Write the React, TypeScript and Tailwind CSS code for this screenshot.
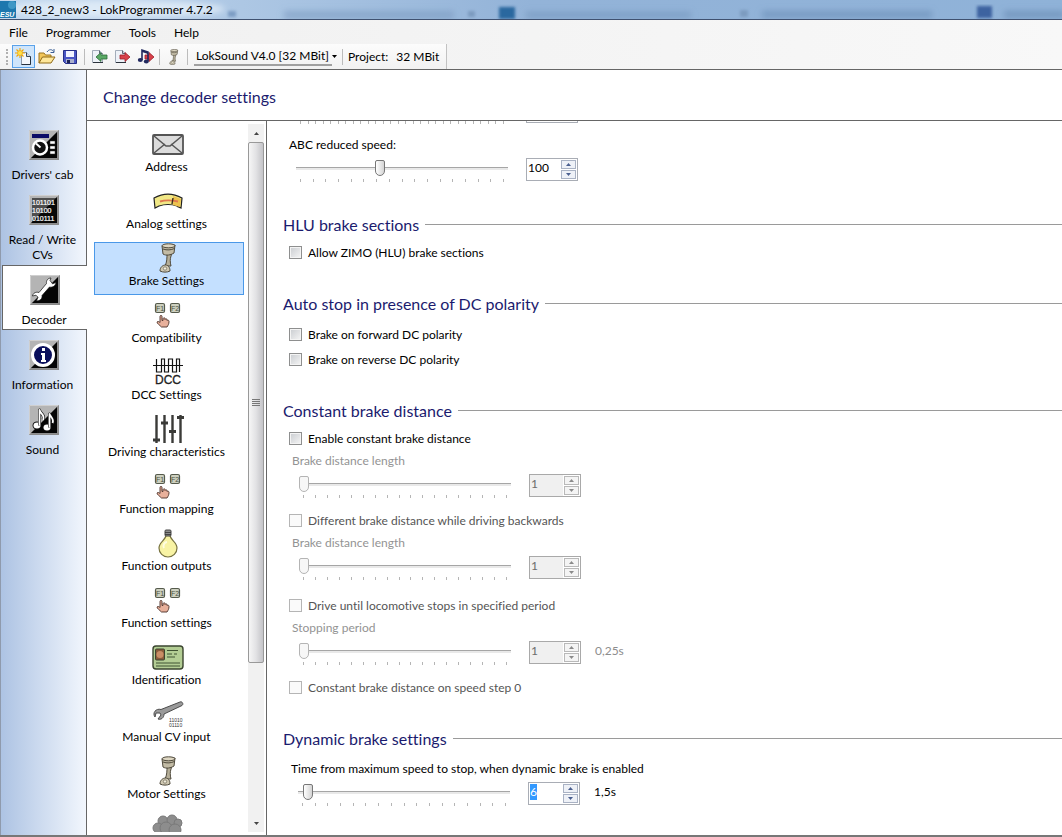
import React, { useEffect, useRef, useState } from 'react';
import clsx from 'clsx';

type IconProps = { className?: string };

/* ---------- toolbar icons ---------- */

const LogoIcon = () => (
  <svg width="16" height="17" viewBox="0 0 16 17" aria-hidden="true">
    <rect width="16" height="17" fill="#1d77ae" />
    <circle cx="12" cy="4" r="4" fill="#55aed6" opacity="0.6" />
    <text x="0" y="16" fontSize="7" fontWeight="bold" fontStyle="italic" fill="#fff" fontFamily="Liberation Sans, sans-serif">
      ESU
    </text>
  </svg>
);

const NewIcon = () => (
  <svg width="18" height="18" viewBox="0 0 18 18" aria-hidden="true">
    <path d="M6.500 4.500h5l4 4v8h-9z" fill="#f4f7fb" stroke="#8b98a8" />
    <path d="M11.500 4.500v4h4" fill="#cfdae6" stroke="#3d4a5a" />
    <path d="M15.500 8.500v8h-9" fill="none" stroke="#27313e" />
    <path d="M5 0v10M0 5h10M1.500 1.500l7 7M8.500 1.500l-7 7" stroke="#f5a800" strokeWidth="1.100" />
    <circle cx="5" cy="5" r="2.500" fill="#ffe14a" stroke="#f0a000" strokeWidth="0.600" />
  </svg>
);

const OpenIcon = () => (
  <svg width="18" height="18" viewBox="0 0 18 18" aria-hidden="true">
    <path d="M1 15V5h5l1.500 2H13v3" fill="#f2c65a" stroke="#9b7420" />
    <path d="M1 15l3.500-6H17l-4 6z" fill="#ffe79a" stroke="#8f6a18" />
    <path d="M9 4c2-3 5-3 6.500-.5M16 1v3.500h-3.500" fill="none" stroke="#3b5f94" />
  </svg>
);

const SaveIcon = () => (
  <svg width="16" height="16" viewBox="0 0 16 16" aria-hidden="true">
    <path d="M1.500 1.500h13v13h-11l-2-2z" fill="#4a56c4" stroke="#262f86" />
    <rect x="4" y="2" width="8" height="6" fill="#f2f4ff" />
    <rect x="4" y="10" width="8" height="4" fill="#aab0cc" />
    <rect x="5" y="11" width="3" height="3" fill="#1d2457" />
  </svg>
);

const ReadIcon = () => (
  <svg width="17" height="17" viewBox="0 0 17 17" aria-hidden="true">
    <path d="M1.500 2.500h7l3 3v9h-10z" fill="#eef2f8" stroke="#a3adba" />
    <path d="M8.500 2.500v3h3" fill="#c8d2de" stroke="#5b6674" />
    <path d="M2 14.500h10" stroke="#2c333d" />
    <path d="M5 9l5-4.500v2.500h6v4h-6v2.500z" fill="#5aa965" stroke="#2b6a38" strokeWidth="0.800" />
  </svg>
);

const WriteIcon = () => (
  <svg width="17" height="17" viewBox="0 0 17 17" aria-hidden="true">
    <path d="M1.500 2.500h7l3 3v9h-10z" fill="#eef2f8" stroke="#a3adba" />
    <path d="M8.500 2.500v3h3" fill="#c8d2de" stroke="#5b6674" />
    <path d="M2 14.500h10" stroke="#2c333d" />
    <path d="M16 9l-5-4.500V7H6v4h5v2.500z" fill="#d8404a" stroke="#9c2028" strokeWidth="0.800" />
  </svg>
);

const WriteSoundIcon = () => (
  <svg width="18" height="17" viewBox="0 0 18 17" aria-hidden="true">
    <path d="M17 9l-5-4.500V7H8v4h4v2.500z" fill="#d8404a" stroke="#9c2028" strokeWidth="0.800" />
    <path d="M5 12V2l6 2v9" fill="none" stroke="#22295f" strokeWidth="1.600" />
    <path d="M5 2l6 2v2L5 4z" fill="#22295f" />
    <ellipse cx="3.300" cy="12" rx="2.500" ry="1.900" fill="#22295f" />
    <ellipse cx="9.300" cy="13.500" rx="2.500" ry="1.900" fill="#22295f" />
  </svg>
);

const PistonIcon = ({ className }: IconProps) => (
  <svg className={className} viewBox="0 0 18 30" aria-hidden="true">
    <path d="M8 10h5l-1 3c-1 3-1 6 0 10l-6 0c2-4 2-8 2-13z" fill="#b5ae98" stroke="#4f4a3c" />
    <path d="M3 3l1 8c3 2 8 1 11-1l1-8z" fill="#c2bba5" stroke="#4f4a3c" />
    <ellipse cx="9.500" cy="2.800" rx="6.500" ry="2" fill="#ddd6c2" stroke="#4f4a3c" />
    <path d="M4 6c4 1.500 8 1 11.500-.5" fill="none" stroke="#4f4a3c" />
    <path d="M1 28c0-4 3-6 5.500-6s4.500 2 4.500 6c-3 1.500-7 1.500-10 0z" fill="#cfc8b2" stroke="#4f4a3c" />
    <circle cx="6" cy="25.500" r="1.700" fill="#f2eede" stroke="#6d6756" strokeWidth="0.700" />
  </svg>
);

/* ---------- sidebar icons ---------- */

const Tile = ({ children }: { children: React.ReactNode }) => (
  <svg width="30" height="30" viewBox="0 0 30 30" aria-hidden="true">
    <rect width="30" height="30" fill="#8e8e8e" />
    <path d="M0 0h30L0 30z" fill="#b4b4b4" />
    <path d="M28 2v26H2z" fill="#050505" />
    <path d="M.5 29.500V.5h29" fill="none" stroke="#cfcfcf" />
    <path d="M29.500.5v29H.5" fill="none" stroke="#8a8a8a" />
    {children}
  </svg>
);

const CabIcon = () => (
  <Tile>
    <rect x="3" y="4" width="17" height="4" fill="#0c0c66" />
    <circle cx="11" cy="17.500" r="7" fill="#111" stroke="#fff" strokeWidth="2.500" />
    <path d="M7 13.500l4.500 4" stroke="#fff" strokeWidth="2" />
    <path d="M21 11h5v3h-5zM21 16h5v3h-5zM21 21h5v3h-5z" fill="#fff" stroke="#333" strokeWidth="0.500" />
  </Tile>
);

const BinaryIcon = () => (
  <Tile>
    <path d="M3 3h24v24H3z" fill="#0a0a0a" opacity="0.6" />
    <g fontFamily="Liberation Sans, sans-serif" fontSize="7" fill="#fff" stroke="#fff" strokeWidth="0.200">
      <text x="3" y="10">101101</text>
      <text x="3" y="18">10100</text>
      <text x="3" y="26">010111</text>
    </g>
  </Tile>
);

const WrenchIcon = () => (
  <Tile>
    <path
      d="M21 3c-3 0-5 2.500-4.500 5.500L9 17.500C6 16.500 3 18 2.500 21l3.500-.8 2 2-1.500 3.500c3.500.5 6-2 5.500-5.200l7.500-8.500c3 .8 6-1 6.500-4.500l-3.500 1.300L20 5.500z"
      fill="#fff"
      stroke="#111"
      strokeWidth="0.700"
    />
  </Tile>
);

const InfoIcon = () => (
  <Tile>
    <circle cx="14" cy="15" r="10.500" fill="#0a0f5c" stroke="#fff" strokeWidth="3" />
    <path d="M13 8h3v3h-3zM12 13h4v7h1v2h-5v-2h1v-5h-1z" fill="#fff" />
  </Tile>
);

const SoundIcon = () => (
  <Tile>
    <g fill="#fff" stroke="#111" strokeWidth="2" paintOrder="stroke">
      <ellipse cx="8" cy="20.500" rx="3.500" ry="3" />
      <ellipse cx="18" cy="22.500" rx="3.500" ry="3" />
    </g>
    <g fill="none" strokeLinejoin="round">
      <path d="M10.500 20.500V5c1 4 6 5 3.500 10M20.500 22.500V9c1 3 5 5 3 9" stroke="#111" strokeWidth="3" />
      <path d="M10.500 20.500V5c1 4 6 5 3.500 10M20.500 22.500V9c1 3 5 5 3 9" stroke="#fff" strokeWidth="1.800" />
    </g>
  </Tile>
);

/* ---------- settings list icons ---------- */

const EnvelopeIcon = () => (
  <svg width="32" height="30" viewBox="0 0 32 30" aria-hidden="true">
    <rect x="1" y="6" width="30" height="19" rx="1" fill="#dcdcdc" stroke="#555" strokeWidth="1.800" />
    <path d="M2 24l11-9M30 24l-11-9M2 7l12 10h4L30 7" fill="none" stroke="#555" strokeWidth="1.500" />
  </svg>
);

const GaugeIcon = () => (
  <svg width="32" height="30" viewBox="0 0 32 30" aria-hidden="true">
    <path d="M2 12c9-5 19-5 28 0l-1 10c-2-1-3-1-4-2-6-2-12-2-18 0l-4 2z" fill="#f1e886" stroke="#222" strokeWidth="1.200" />
    <path d="M21 10l8 3-1 8-7-2z" fill="#ecc24e" />
    <path d="M8 15.500c5-1.500 11-1.500 18 0" stroke="#e0774f" strokeWidth="2" fill="none" />
    <path d="M21 12l-1 6" stroke="#3a2a1a" strokeWidth="1.400" />
  </svg>
);

const KeysIcon = () => (
  <svg width="32" height="30" viewBox="0 0 32 30" aria-hidden="true">
    <g fill="#cdd0bf" stroke="#555a4c" strokeWidth="1.200">
      <rect x="3.500" y="3.500" width="9" height="9" rx="1.500" />
      <rect x="18.500" y="3.500" width="9" height="9" rx="1.500" />
    </g>
    <g fontFamily="Liberation Sans, sans-serif" fontSize="7" fill="#4c5043">
      <text x="4" y="10.500">F1</text>
      <text x="19" y="10.500">F2</text>
    </g>
    <path
      d="M8 16.500c0-1.500 2-1.500 2 0v4h1v-2c.5-1 2-1 2 0v1c.5-1 2-1 2 .3v.7c.6-.6 2-.4 2 .8 0 3-1 4-2 5.700H9.500C7.500 25 5 23.500 5 22c.5-1 2-.5 3 .5z"
      fill="#e8b09b"
      stroke="#4b3028"
      strokeWidth="0.900"
    />
  </svg>
);

const DccIcon = () => (
  <svg width="32" height="30" viewBox="0 0 32 30" aria-hidden="true">
    <path
      d="M1 8.500h30M4.500 2v13h5V2h3v13h4V2h4v13h4V2h3v13"
      fill="none"
      stroke="#111"
      strokeWidth="1.200"
    />
    <text x="16" y="27" textAnchor="middle" fontFamily="Liberation Sans, sans-serif" fontSize="12" fill="#222" stroke="#222" strokeWidth="0.300">
      DCC
    </text>
  </svg>
);

const FadersIcon = () => (
  <svg width="32" height="30" viewBox="0 0 32 30" aria-hidden="true">
    <path d="M4.500 1v28M12.500 1v28M20.500 1v28M28.500 1v28" stroke="#3b3b38" strokeWidth="2.400" />
    <path d="M1 26h7M9 9h7M17 17.500h7M25 3.500h7" stroke="#3b3b38" strokeWidth="3" />
  </svg>
);

const BulbIcon = () => (
  <svg width="32" height="30" viewBox="0 0 32 30" aria-hidden="true">
    <path d="M14 7c0 5-7 7-7 13a9 9 0 0 0 18 0c0-6-7-8-7-13z" fill="#f8f3a4" stroke="#77723f" strokeWidth="1.200" />
    <path d="M12 20a4 4 0 0 1 3-6" fill="none" stroke="#fffde0" strokeWidth="2" />
    <rect x="13" y="2" width="6" height="6" rx="1" fill="#8c8c8c" stroke="#444" />
    <path d="M13 4.500h6M13 6.500h6" stroke="#333" strokeWidth="0.800" />
  </svg>
);

const CardIcon = () => (
  <svg width="32" height="30" viewBox="0 0 32 30" aria-hidden="true">
    <rect x="1" y="4" width="30" height="23" rx="3" fill="#b3cd94" stroke="#3b4530" strokeWidth="1.400" />
    <rect x="3.500" y="7" width="9" height="11" rx="1" fill="#8a5a3a" stroke="#3b4530" />
    <circle cx="8" cy="12.500" r="3.500" fill="#c98d66" />
    <path d="M15 8.500h11M15 12h5M22 12h3M15 15h8M4 21h24M4 24h24" stroke="#3f5232" />
  </svg>
);

const ManualIcon = () => (
  <svg width="32" height="30" viewBox="0 0 32 30" aria-hidden="true">
    <path
      d="M28 3c2-1 4 2 2 3.500L12 15c0 4-3 6-6 5l3-4-1-2-4 0-1 4c-3-4 1-9 6-7.500z"
      fill="#9a9a9a"
      stroke="#4c4c4c"
    />
    <g fontFamily="Liberation Sans, sans-serif" fontSize="5" fill="#333">
      <text x="17" y="23">11010</text>
      <text x="17" y="28">01110</text>
    </g>
  </svg>
);

const SmokeIcon = () => (
  <svg width="32" height="30" viewBox="0 0 32 30" aria-hidden="true">
    <g fill="#8d8d8d" stroke="#7a7a7a">
      <circle cx="11" cy="8" r="5" />
      <circle cx="20" cy="7" r="5" />
      <circle cx="26" cy="10" r="4" />
      <circle cx="6" cy="15" r="5" />
      <circle cx="14" cy="15" r="6" />
      <circle cx="23" cy="17" r="6" />
    </g>
  </svg>
);

const SettingsPistonIcon = () => <PistonIcon className="h-[30px] w-[18px]" />;

/* ---------- data ---------- */

const SIDEBAR = [
  { label: "Drivers' cab", icon: CabIcon },
  { label: 'Read / Write CVs', icon: BinaryIcon },
  { label: 'Decoder', icon: WrenchIcon },
  { label: 'Information', icon: InfoIcon },
  { label: 'Sound', icon: SoundIcon },
];

const SETTINGS = [
  { label: 'Address', icon: EnvelopeIcon },
  { label: 'Analog settings', icon: GaugeIcon },
  { label: 'Brake Settings', icon: SettingsPistonIcon },
  { label: 'Compatibility', icon: KeysIcon },
  { label: 'DCC Settings', icon: DccIcon },
  { label: 'Driving characteristics', icon: FadersIcon },
  { label: 'Function mapping', icon: KeysIcon },
  { label: 'Function outputs', icon: BulbIcon },
  { label: 'Function settings', icon: KeysIcon },
  { label: 'Identification', icon: CardIcon },
  { label: 'Manual CV input', icon: ManualIcon },
  { label: 'Motor Settings', icon: SettingsPistonIcon },
];

/* ---------- form parts ---------- */

const Section = ({ title, className, children }: { title: string; className?: string; children: React.ReactNode }) => (
  <section className={className}>
    <div className="flex h-6 items-center gap-[6px] pl-4">
      <h2 className="shrink-0 text-[16px] leading-6 text-[#1b1b6e]">{title}</h2>
      <div className="mb-0.5 h-px flex-1 bg-[#9a9a9a]" />
    </div>
    {children}
  </section>
);

const Check = ({ label, disabled }: { label: string; disabled?: boolean }) => (
  <label className={clsx('flex h-[25px] items-center gap-1.5', disabled ? 'text-[#555]' : 'text-black')}>
    <input
      type="checkbox"
      disabled={disabled}
      className={clsx(
        'size-[13px] appearance-none border p-px',
        disabled
          ? 'border-[#b5b5b5] bg-[#fafafa]'
          : 'border-[#8e8f8f] bg-linear-to-br from-[#c9ccd0] to-[#f6f6f6] shadow-[inset_0_0_0_1px_#f4f4f4] checked:bg-[#4b6fae]',
      )}
    />
    {label}
  </label>
);

const TriangleIcon = ({ down, className }: { down?: boolean; className?: string }) => (
  <svg width="5" height="3" viewBox="0 0 5 3" className={className} aria-hidden="true">
    <path d={down ? 'M0 0h5L2.500 3z' : 'M0 3h5L2.500 0z'} fill="currentColor" />
  </svg>
);

interface SliderRowProps {
  label: string;
  value: number;
  min?: number;
  max: number;
  ticks: number;
  suffix?: string;
  disabled?: boolean;
  selected?: boolean;
}

const SliderRow = ({ label, value: initial, min = 0, max, ticks, suffix, disabled, selected }: SliderRowProps) => {
  const [value, setValue] = useState(initial);
  const field = useRef<HTMLInputElement>(null);

  useEffect(() => {
    if (selected) {
      field.current?.focus();
      field.current?.select();
    }
  }, [selected]);

  const change = (next: number) => setValue(Math.min(max, Math.max(min, next || 0)));
  const spinButton = clsx(
    'flex h-[9px] w-[15px] items-center justify-center border',
    disabled ? 'border-[#b9b9b9] bg-[#f4f4f4] text-[#8a8a8a]' : 'border-[#a9b2c4] bg-[#eef1f7] text-[#4a5f8f]',
  );

  return (
    <div className="flex items-start">
      <div className="w-[212px] pt-0.5">
        <input
          type="range"
          aria-label={label}
          min={min}
          max={max}
          value={value}
          disabled={disabled}
          onChange={(e) => change(Number(e.target.value))}
          className={clsx(
            'block h-4 w-full appearance-none bg-transparent',
            '[&::-webkit-slider-runnable-track]:h-[3px] [&::-webkit-slider-runnable-track]:border-t [&::-webkit-slider-runnable-track]:bg-[#e9e9e9]',
            '[&::-webkit-slider-runnable-track]:border-[#a6a6a6]',
            '[&::-webkit-slider-thumb]:-mt-2 [&::-webkit-slider-thumb]:h-4 [&::-webkit-slider-thumb]:w-[10px] [&::-webkit-slider-thumb]:appearance-none',
            '[&::-webkit-slider-thumb]:rounded-t-[2px] [&::-webkit-slider-thumb]:rounded-b-[5px] [&::-webkit-slider-thumb]:border',
            disabled
              ? '[&::-webkit-slider-thumb]:border-[#b4b4b4] [&::-webkit-slider-thumb]:bg-[#f7f7f7]'
              : '[&::-webkit-slider-thumb]:border-[#777] [&::-webkit-slider-thumb]:bg-linear-to-r [&::-webkit-slider-thumb]:from-white [&::-webkit-slider-thumb]:to-[#d4d4d4]',
          )}
        />
        <div className="mt-[3px] flex justify-between px-1">
          {Array.from({ length: ticks }, (_, i) => (
            <span key={i} className="h-[3px] w-px bg-[#b5b5b5]" />
          ))}
        </div>
      </div>
      <div
        className={clsx(
          'ml-[18px] flex h-[23px] w-[52px] border',
          disabled ? 'border-[#a9a9a9] bg-[#f0f0f0]' : 'border-[#a9adb5] bg-white',
        )}
      >
        <input
          ref={field}
          type="text"
          aria-label={`${label} value`}
          value={value}
          disabled={disabled}
          onChange={(e) => change(Number(e.target.value))}
          className={clsx(
            'mt-px h-4 min-w-0 flex-1 bg-transparent pl-px leading-4 outline-none selection:bg-[#3399ff] selection:text-white',
            disabled ? 'text-[#6d6d6d]' : 'text-black',
          )}
        />
        <div className="flex flex-col gap-px bg-white p-px">
          <button type="button" aria-label="Increase" disabled={disabled} onClick={() => change(value + 1)} className={spinButton}>
            <TriangleIcon />
          </button>
          <button type="button" aria-label="Decrease" disabled={disabled} onClick={() => change(value - 1)} className={spinButton}>
            <TriangleIcon down />
          </button>
        </div>
      </div>
      {suffix && (
        <span className={clsx('ml-[14px] leading-5', disabled ? 'text-[#8d8d8d]' : 'text-black')}>{suffix}</span>
      )}
    </div>
  );
};

const FieldLabel = ({ disabled, children }: { disabled?: boolean; children: React.ReactNode }) => (
  <div className={clsx('h-5 leading-5', disabled ? 'text-[#939393]' : 'text-black')}>{children}</div>
);

/* ---------- window parts ---------- */

const TitleBar = () => (
  <header className="relative flex h-5 shrink-0 items-center overflow-hidden border-b border-[#3f5170] bg-linear-to-r from-[#c3d8ee] via-[#93b3d8] to-[#8fb2d8] text-black">
    <svg className="absolute inset-0 size-full" aria-hidden="true">
      <defs>
        <filter id="glass">
          <feGaussianBlur stdDeviation="3" />
        </filter>
        <filter id="glass-light">
          <feGaussianBlur stdDeviation="1.500" />
        </filter>
      </defs>
      <g filter="url(#glass)">
        <ellipse cx="115" cy="9" rx="110" ry="9" fill="#e6f0fa" opacity="0.8" />
        <rect x="284" y="11" width="170" height="8" fill="#7898be" opacity="0.600" />
        <rect x="526" y="12" width="165" height="6" fill="#6e91b8" opacity="0.600" />
        <rect x="762" y="11" width="170" height="7" fill="#6589b2" opacity="0.600" />
        <rect x="1004" y="11" width="60" height="7" fill="#6485ad" opacity="0.600" />
      </g>
      <g filter="url(#glass-light)">
        <rect x="228" y="11" width="8" height="6" fill="#7d9dc4" />
        <rect x="468" y="11" width="7" height="6" fill="#7d9bc0" />
        <rect x="499" y="7" width="16" height="12" fill="#2c689f" />
        <rect x="740" y="10" width="8" height="7" fill="#7d9bc0" />
        <rect x="977" y="6" width="15" height="12" fill="#3c63a0" />
      </g>
    </svg>
    <div className="relative flex items-center gap-[5px]">
      <LogoIcon />
      <h1 className="text-[12px] leading-[18px]">428_2_new3 - LokProgrammer 4.7.2</h1>
    </div>
  </header>
);

const Divider = ({ className }: IconProps) => <div className={clsx('h-4 w-px bg-[#bcbcbc]', className)} />;

const ToolButton = ({ label, active, children }: { label: string; active?: boolean; children: React.ReactNode }) => (
  <button
    type="button"
    aria-label={label}
    className={clsx(
      'flex size-[23px] items-center justify-center',
      active ? 'border border-[#5aa2ea] bg-[#cfe5fb]' : 'hover:bg-[#dcebfb]',
    )}
  >
    {children}
  </button>
);

const Toolbar = () => (
  <div className="flex h-[25px] w-fit items-center border-r border-[#c2c2c2] bg-linear-to-b from-[#fcfcfc] to-[#f2f2f2] pr-[7px] pl-1.5 text-black">
    <div className="mr-1 h-4 w-0.5 border-l-2 border-dotted border-[#b0b0b0]" />
    <ToolButton label="New" active>
      <NewIcon />
    </ToolButton>
    <ToolButton label="Open">
      <OpenIcon />
    </ToolButton>
    <ToolButton label="Save">
      <SaveIcon />
    </ToolButton>
    <Divider className="mx-[3px]" />
    <ToolButton label="Read decoder data">
      <ReadIcon />
    </ToolButton>
    <ToolButton label="Write decoder data">
      <WriteIcon />
    </ToolButton>
    <ToolButton label="Write sound data">
      <WriteSoundIcon />
    </ToolButton>
    <Divider className="mx-[2px]" />
    <ToolButton label="Motor">
      <PistonIcon className="h-4 w-[10px]" />
    </ToolButton>
    <Divider className="mr-[6px] ml-[2px]" />
    <div className="flex items-center">
      <select
        aria-label="Decoder type"
        className="h-[19px] w-[138px] appearance-none border-b-2 border-[#a0a0a0] bg-transparent pl-0.5 leading-[15px] outline-none"
      >
        <option>LokSound V4.0 [32 MBit]</option>
      </select>
      <TriangleIcon down />
    </div>
    <Divider className="mx-[5px]" />
    <span>Project:</span>
    <span className="ml-2">32 MBit</span>
  </div>
);

const Sidebar = () => (
  <nav className="flex w-[87px] shrink-0 flex-col border-l border-[#8f9aac] bg-linear-to-r from-[#adc3e3] to-[#f3f7fd]">
    <div className="h-[50px] border-r border-[#666]" />
    {SIDEBAR.map(({ label, icon: Icon }) => {
      const active = label === 'Decoder';
      return (
        <button
          key={label}
          type="button"
          aria-current={active ? 'page' : undefined}
          className={clsx(
            'flex flex-col items-center text-black',
            active
              ? 'ml-px border-y border-l border-[#666] bg-white pt-[9px] pb-px'
              : 'border-r border-[#666] pt-2.5 pb-0.5',
          )}
        >
          <Icon />
          <span className="mt-[7px] max-w-[76px] pr-0.5 pb-px leading-[15px]">{label}</span>
        </button>
      );
    })}
    <div className="flex-1 border-r border-[#666]" />
  </nav>
);

const SettingsList = () => (
  <div className="flex w-[180px] shrink-0 border-r border-[#666] pt-[3px] pr-[2px] pb-[3px] pl-[7px]">
    <div className="flex h-full w-[150px] flex-col gap-1 overflow-hidden pt-1">
      {SETTINGS.map(({ label, icon: Icon }) => {
        const active = label === 'Brake Settings';
        return (
          <button
            key={label}
            type="button"
            aria-pressed={active}
            className={clsx(
              'flex h-[53px] shrink-0 flex-col items-center border pr-0.5 text-black',
              active ? 'border-[#4a98e8] bg-[#c4e0ff]' : 'border-transparent',
            )}
          >
            <Icon />
            <span className="pr-[3px] leading-4">{label}</span>
          </button>
        );
      })}
      <button type="button" aria-label="Smoke unit" className="flex h-[53px] shrink-0 flex-col items-center border border-transparent pr-0.5">
        <SmokeIcon />
      </button>
    </div>
    <div className="ml-auto flex w-4 flex-col bg-[#f1f1f1]">
      <button type="button" aria-label="Scroll up" className="flex h-[18px] items-center justify-center text-[#444]">
        <TriangleIcon />
      </button>
      <div className="flex flex-1 flex-col">
        <div className="flex h-[77.5%] flex-col items-center justify-center gap-px rounded-[2px] border border-[#999] bg-linear-to-r from-[#f6f6f6] via-[#e2e2e4] to-[#c4c4c8]">
          {[0, 1, 2, 3].map((i) => (
            <span key={i} className="h-px w-2 bg-[#777]" />
          ))}
        </div>
      </div>
      <button type="button" aria-label="Scroll down" className="flex h-[18px] items-center justify-center text-[#444]">
        <TriangleIcon down />
      </button>
    </div>
  </div>
);

const BrakeSettings = () => (
  <main className="min-w-0 flex-1 overflow-hidden">
    {/* lower edge of the row that is scrolled out of view */}
    <div className="flex h-[3px] items-end overflow-hidden pl-[29px]">
      <SliderRow label="ABC slow speed" value={0} max={100} ticks={28} />
    </div>
    <div className="pt-[11px] pl-[22px]">
      <FieldLabel>ABC reduced speed:</FieldLabel>
      <div className="pt-[3px] pl-[7px]">
        <SliderRow label="ABC reduced speed" value={100} max={255} ticks={17} />
      </div>
    </div>

    <Section title="HLU brake sections" className="pt-[31px]">
      <div className="pt-[3px] pl-[22px]">
        <Check label="Allow ZIMO (HLU) brake sections" />
      </div>
    </Section>

    <Section title="Auto stop in presence of DC polarity" className="pt-[27px]">
      <div className="pt-[6px] pl-[22px]">
        <Check label="Brake on forward DC polarity" />
        <Check label="Brake on reverse DC polarity" />
      </div>
    </Section>

    <Section title="Constant brake distance" className="pt-[27px]">
      <div className="pt-[3px] pl-[22px]">
        <Check label="Enable constant brake distance" />
        <div className="pl-[3px]">
          <FieldLabel disabled>Brake distance length</FieldLabel>
          <div className="pt-[3px] pl-[7px]">
            <SliderRow label="Brake distance length" value={1} min={1} max={255} ticks={18} disabled />
          </div>
        </div>
        <div className="pt-[10px]">
          <Check label="Different brake distance while driving backwards" disabled />
        </div>
        <div className="pl-[3px]">
          <FieldLabel disabled>Brake distance length</FieldLabel>
          <div className="pt-[3px] pl-[7px]">
            <SliderRow label="Brake distance length backwards" value={1} min={1} max={255} ticks={18} disabled />
          </div>
        </div>
        <div className="pt-[13px]">
          <Check label="Drive until locomotive stops in specified period" disabled />
        </div>
        <div className="pl-[3px]">
          <FieldLabel disabled>Stopping period</FieldLabel>
          <div className="pt-[3px] pl-[7px]">
            <SliderRow label="Stopping period" value={1} min={1} max={255} ticks={18} suffix="0,25s" disabled />
          </div>
        </div>
        <div className="pt-[10px]">
          <Check label="Constant brake distance on speed step 0" disabled />
        </div>
      </div>
    </Section>

    <Section title="Dynamic brake settings" className="pt-[27px]">
      <div className="pt-2 pl-6">
        <FieldLabel>Time from maximum speed to stop, when dynamic brake is enabled</FieldLabel>
        <div className="pt-[3px] pl-[7px]">
          <SliderRow label="Dynamic brake time" value={6} max={255} ticks={17} suffix="1,5s" selected />
        </div>
      </div>
    </Section>
  </main>
);

const App = () => (
  <div className="flex h-screen flex-col overflow-hidden bg-white font-['Lato','Open_Sans',sans-serif] text-[12px] leading-[15px] [font-variant-ligatures:none]">
    <TitleBar />
    <div className="shrink-0 border-b border-[#666] bg-linear-to-r from-[#f0f0f0] to-[#f8f8f8]">
      <div className="flex h-6 items-center text-black">
        {['File', 'Programmer', 'Tools', 'Help'].map((item) => (
          <button key={item} type="button" className="px-[9px]">
            {item}
          </button>
        ))}
      </div>
      <Toolbar />
    </div>
    <div className="flex min-h-0 flex-1 overflow-hidden border-b-2 border-[#777]">
      <Sidebar />
      <div className="flex min-w-0 flex-1 flex-col">
        <div className="flex h-[51px] shrink-0 items-center border-b border-[#666] pt-0.5 pl-4 text-[16px] text-[#1b1b6e]">
          Change decoder settings
        </div>
        <div className="flex min-h-0 flex-1">
          <SettingsList />
          <BrakeSettings />
        </div>
      </div>
    </div>
  </div>
);

export default App;
